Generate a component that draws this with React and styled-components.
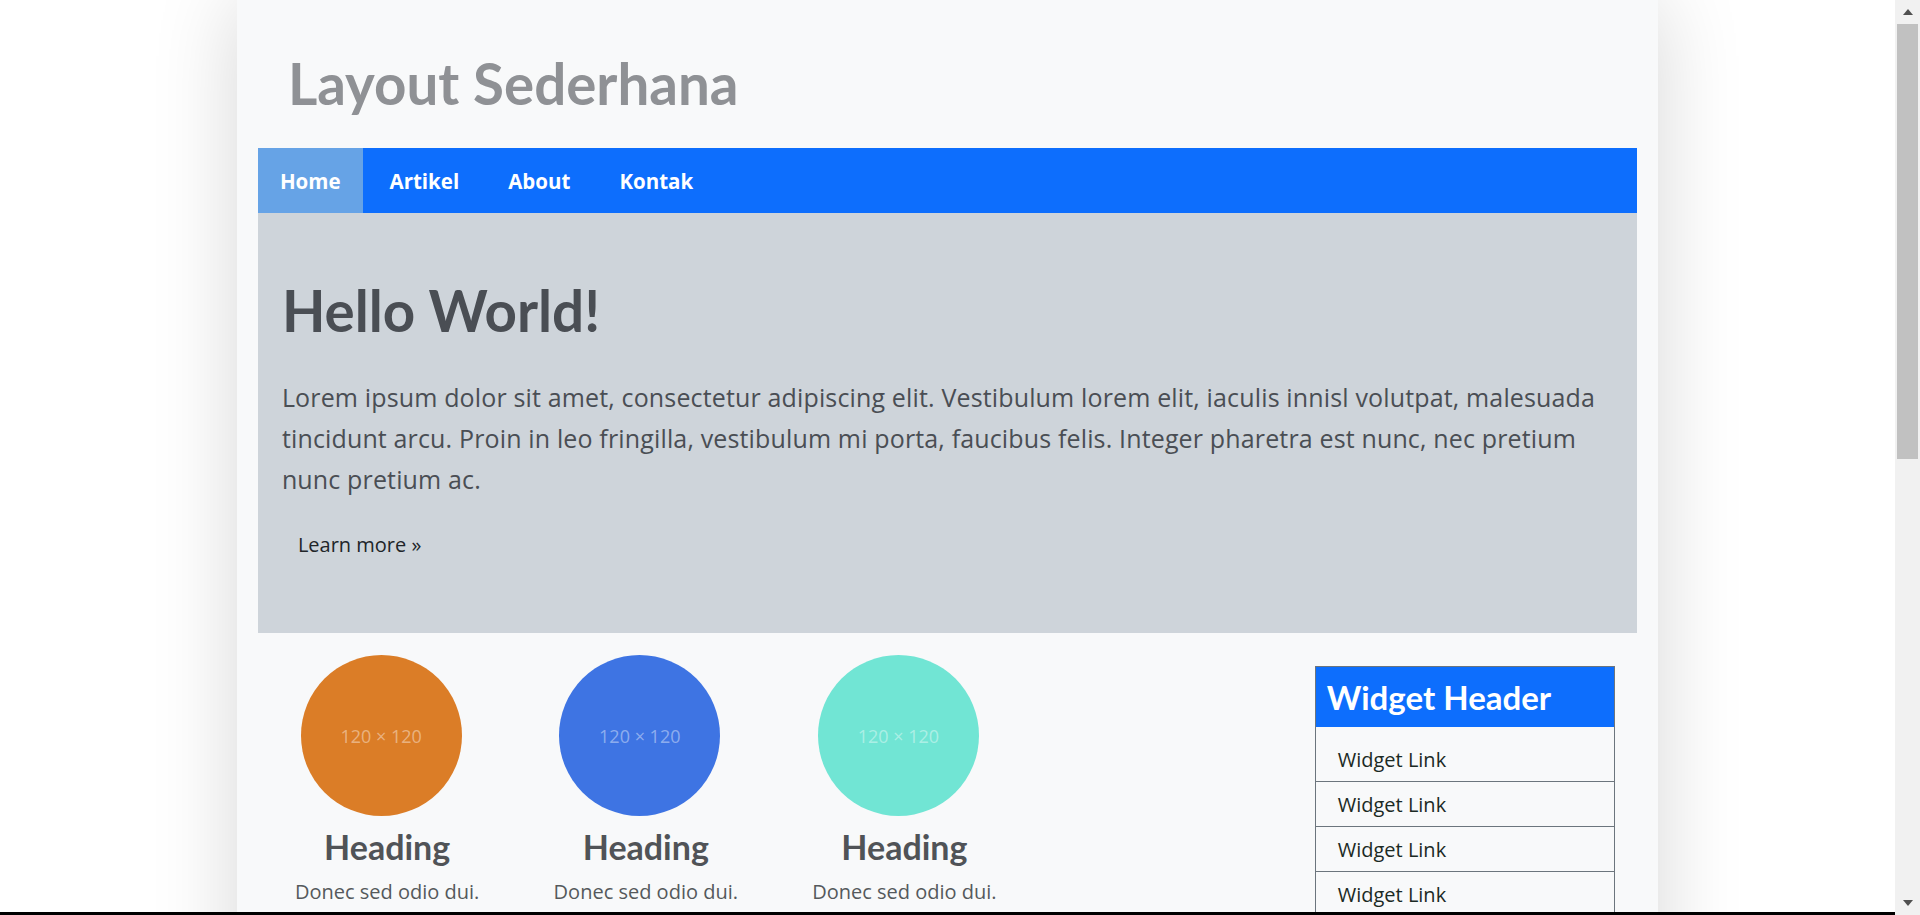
import styled, { createGlobalStyle } from "styled-components";

const GlobalStyle = createGlobalStyle`
  *, *::before, *::after {
    box-sizing: border-box;
  }

  html {
    background: #ffffff;
    scrollbar-width: none;
  }

  html::-webkit-scrollbar {
    display: none;
  }

  body {
    margin: 0;
    padding-right: 25px;
    background: #ffffff;
    font-family: "Open Sans", "Noto Sans", sans-serif;
    color: #212529;
  }
`;

const Page = styled.div`
  width: 75%;
  min-height: 1824px;
  margin: 0 auto;
  padding: 0 21px;
  background: #f8f9fa;
  box-shadow: 0 0 80px rgba(0, 0, 0, 0.16);
  display: flex;
  flex-direction: column;
`;

const Header = styled.header`
  padding: 50px 30px 31px;
`;

const Title = styled.h1`
  margin: 0;
  font-family: "Lato", "Open Sans", sans-serif;
  font-size: 56.5px;
  line-height: 67px;
  font-weight: 700;
  color: #8f9195;
`;

const Nav = styled.nav`
  display: flex;
  gap: 5px;
  height: 65px;
  background: #0d6efd;
`;

const NavLink = styled.a`
  display: flex;
  align-items: center;
  padding: 0 22px;
  font-size: 20.5px;
  font-weight: 700;
  color: #ffffff;
  text-decoration: none;
  background: ${(p) => (p.$active ? "#66a3e6" : "transparent")};
`;

const Jumbotron = styled.section`
  padding: 64px 24px 65px;
  background: #ced4da;
`;

const HeroTitle = styled.h2`
  margin: 0 0 33px;
  font-family: "Lato", "Open Sans", sans-serif;
  font-size: 56.5px;
  line-height: 67px;
  font-weight: 700;
  color: #4a4e54;
`;

const Lead = styled.p`
  margin: 0 0 23px;
  font-size: 25px;
  letter-spacing: 0.15px;
  line-height: 40.8px;
  color: #4a4e54;
`;

const LearnMore = styled.a`
  display: inline-block;
  padding: 8px 16px;
  font-size: 20px;
  line-height: 30px;
  color: #212529;
  text-decoration: none;
`;

const Content = styled.div`
  display: grid;
  grid-template-columns: 3fr 1fr;
  flex: 1;
`;

const Features = styled.div`
  display: grid;
  grid-template-columns: repeat(4, 1fr);
  align-content: start;
`;

const Feature = styled.div`
  display: flex;
  flex-direction: column;
  align-items: center;
  padding-top: 22px;
  text-align: center;
`;

const Circle = styled.div`
  width: 161px;
  height: 161px;
  margin-right: 12px;
  border-radius: 50%;
  display: flex;
  align-items: center;
  justify-content: center;
  background: ${(p) => p.$color};
  color: rgba(255, 255, 255, 0.42);
  font-size: 18px;
`;

const FeatureHeading = styled.h3`
  margin: 12px 0 11px;
  font-family: "Lato", "Open Sans", sans-serif;
  font-size: 34px;
  line-height: 38px;
  font-weight: 700;
  color: #505357;
`;

const FeatureText = styled.p`
  margin: 0;
  font-size: 20px;
  line-height: 30px;
  color: #55595c;
`;

const Aside = styled.aside`
  padding: 33px 22px 0;
`;

const Widget = styled.div`
  width: 300px;
  margin: 0 auto;
  border: 1px solid #6c757d;
`;

const WidgetHeader = styled.h3`
  margin: 0;
  height: 60px;
  padding: 0 11px;
  font-family: "Lato", "Open Sans", sans-serif;
  font-size: 33px;
  line-height: 60px;
  font-weight: 700;
  color: #ffffff;
  background: #0d6efd;
`;

const WidgetList = styled.ul`
  margin: 0;
  padding: 10px 0 0;
  list-style: none;
`;

const WidgetItem = styled.li`
  height: 45px;
  padding-left: 22px;
  display: flex;
  align-items: center;
  font-size: 20px;
  color: #1b2a24;
  border-bottom: 1px solid #6c757d;

  &:last-child {
    border-bottom: none;
  }
`;

const Footer = styled.footer`
  padding: 30px 24px;
  margin-top: 40px;
  font-size: 18px;
  color: #6c757d;
  border-top: 1px solid #dee2e6;
  text-align: center;
`;

/* window scrollbar as drawn in the reference (the real one is hidden by the browser) */
const ScrollBar = styled.div`
  position: fixed;
  top: 0;
  right: 0;
  bottom: 0;
  width: 25px;
  display: flex;
  flex-direction: column;
  background: #f1f1f1;
`;

const ScrollButton = styled.div`
  height: 24px;
  flex-shrink: 0;
  display: flex;
  align-items: center;
  justify-content: center;

  &::before {
    content: "";
    border-left: 5.5px solid transparent;
    border-right: 5.5px solid transparent;
    ${(p) => (p.$down ? "border-top: 6px solid #505050;" : "border-bottom: 6px solid #505050;")}
  }
`;

const ScrollTrack = styled.div`
  flex: 1;
`;

const ScrollThumb = styled.div`
  height: 435px;
  margin: 0 2px;
  background: #c1c1c1;
`;

const BottomEdge = styled.div`
  position: fixed;
  left: 0;
  right: 25px;
  bottom: 0;
  height: 3px;
  background: #000000;
`;

const navItems = ["Home", "Artikel", "About", "Kontak"];

const features = [{ color: "#db7d27" }, { color: "#3e74e3" }, { color: "#71e5d4" }];

export default function App() {
  return (
    <>
      <GlobalStyle />
      <Page>
        <Header>
          <Title>Layout Sederhana</Title>
        </Header>
        <Nav>
          {navItems.map((item, i) => (
            <NavLink key={item} href="#" $active={i === 0}>
              {item}
            </NavLink>
          ))}
        </Nav>
        <Jumbotron>
          <HeroTitle>Hello World!</HeroTitle>
          <Lead>
            Lorem ipsum dolor sit amet, consectetur adipiscing elit. Vestibulum lorem elit, iaculis innisl volutpat,
            malesuada tincidunt arcu. Proin in leo fringilla, vestibulum mi porta, faucibus felis. Integer pharetra
            est nunc, nec pretium nunc pretium ac.
          </Lead>
          <LearnMore href="#">Learn more »</LearnMore>
        </Jumbotron>
        <Content>
          <Features>
            {features.map((f, i) => (
              <Feature key={i}>
                <Circle $color={f.color}>120 × 120</Circle>
                <FeatureHeading>Heading</FeatureHeading>
                <FeatureText>Donec sed odio dui.</FeatureText>
              </Feature>
            ))}
          </Features>
          <Aside>
            <Widget>
              <WidgetHeader>Widget Header</WidgetHeader>
              <WidgetList>
                {Array.from({ length: 6 }).map((_, i) => (
                  <WidgetItem key={i}>Widget Link</WidgetItem>
                ))}
              </WidgetList>
            </Widget>
          </Aside>
        </Content>
        <Footer>Copyright © Layout Sederhana</Footer>
      </Page>
      <ScrollBar>
        <ScrollButton />
        <ScrollTrack>
          <ScrollThumb />
        </ScrollTrack>
        <ScrollButton $down />
      </ScrollBar>
      <BottomEdge />
    </>
  );
}
